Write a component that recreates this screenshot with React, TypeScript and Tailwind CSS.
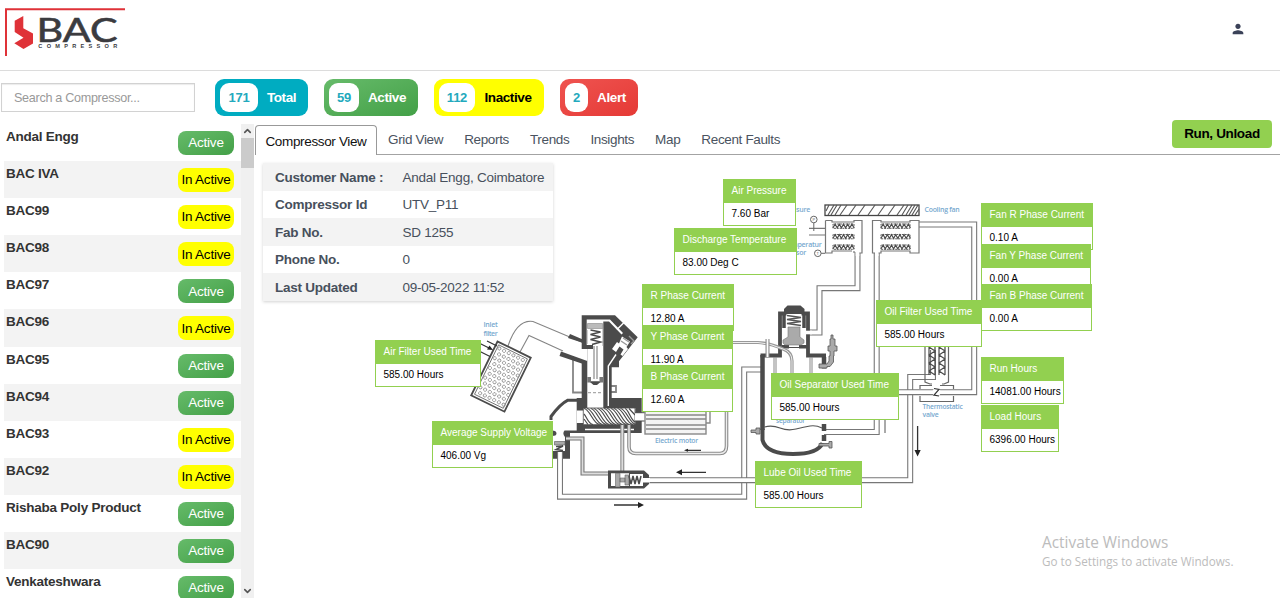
import { MdPerson } from "react-icons/md";
import { LuChevronDown, LuChevronUp } from "react-icons/lu";
import clsx from "clsx";

const compressors: [string, boolean][] = [
  ["Andal Engg", true],
  ["BAC IVA", false],
  ["BAC99", false],
  ["BAC98", false],
  ["BAC97", true],
  ["BAC96", false],
  ["BAC95", true],
  ["BAC94", true],
  ["BAC93", false],
  ["BAC92", false],
  ["Rishaba Poly Product", true],
  ["BAC90", true],
  ["Venkateshwara", true],
];

const chips = [
  { n: "171", label: "Total", box: "w-[93px] bg-[#00acc1] text-white", num: "w-[38px]" },
  { n: "59", label: "Active", box: "w-[94px] bg-linear-to-br from-[#66bb6a] to-[#43a047] text-white", num: "w-[30px]" },
  { n: "112", label: "Inactive", box: "w-[110px] bg-[#ffff00] text-black", num: "w-[36px]" },
  { n: "2", label: "Alert", box: "w-[78px] bg-linear-to-br from-[#ef5350] to-[#e53935] text-white", num: "w-[23px]" },
];

const tabs = ["Grid View", "Reports", "Trends", "Insights", "Map", "Recent Faults"];

const info = [
  ["Customer Name :", "Andal Engg, Coimbatore"],
  ["Compressor Id", "UTV_P11"],
  ["Fab No.", "SD 1255"],
  ["Phone No.", "0"],
  ["Last Updated", "09-05-2022 11:52"],
];

// Readings pinned on the schematic; positions are relative to the canvas.
const readings = [
  { label: "Air Pressure", value: "7.60 Bar", pos: "left-[468px] top-[24px] w-[73px]" },
  { label: "Discharge Temperature", value: "83.00 Deg C", pos: "left-[419px] top-[73px] w-[123px]" },
  { label: "R Phase Current", value: "12.80 A", pos: "left-[387px] top-[129px] w-[92px]" },
  { label: "Y Phase Current", value: "11.90 A", pos: "left-[387px] top-[170px] w-[91px]" },
  { label: "B Phase Current", value: "12.60 A", pos: "left-[387px] top-[210px] w-[91px]" },
  { label: "Oil Filter Used Time", value: "585.00 Hours", pos: "left-[621px] top-[145px] w-[106px]" },
  { label: "Fan R Phase Current", value: "0.10 A", pos: "left-[726px] top-[48px] w-[112px]" },
  { label: "Fan Y Phase Current", value: "0.00 A", pos: "left-[726px] top-[89px] w-[110px]" },
  { label: "Fan B Phase Current", value: "0.00 A", pos: "left-[726px] top-[129px] w-[111px]" },
  { label: "Run Hours", value: "14081.00 Hours", pos: "left-[726px] top-[202px] w-[83px]" },
  { label: "Load Hours", value: "6396.00 Hours", pos: "left-[726px] top-[250px] w-[78px]" },
  { label: "Oil Separator Used Time", value: "585.00 Hours", pos: "left-[516px] top-[218px] w-[128px]" },
  { label: "Lube Oil Used Time", value: "585.00 Hours", pos: "left-[500px] top-[306px] w-[107px]" },
  { label: "Air Filter Used Time", value: "585.00 Hours", pos: "left-[120px] top-[185px] w-[106px]" },
  { label: "Average Supply Voltage", value: "406.00 Vg", pos: "left-[177px] top-[266px] w-[121px]" },
];

function Logo() {
  return (
    <svg width="130" height="60" viewBox="0 0 130 60">
      <path d="M6 56V9.3H125" fill="none" stroke="#df3238" strokeWidth="2" />
      <path d="M23.3 16V28.3L33 33.5V43.5L23.5 49L14.3 43.3L23.5 37.8L14.7 32V20.7Z" fill="#df3238" />
      <text x="36.5" y="42" fontFamily="Lato, sans-serif" fontSize="33" fill="#3b3b3f" stroke="#3b3b3f" strokeWidth=".6" textLength="81" lengthAdjust="spacingAndGlyphs">BAC</text>
      <text x="38.3" y="48" fontFamily="Liberation Sans, sans-serif" fontWeight="700" fontSize="5.6" fill="#3b3b3f" textLength="79">COMPRESSOR</text>
    </svg>
  );
}

function Pipe({ d, w = 6, color = "#777777", inner = "#fff" }: { d: string; w?: number; color?: string; inner?: string }) {
  return (
    <g fill="none" strokeLinejoin="miter">
      <path d={d} stroke={color} strokeWidth={w} />
      <path d={d} stroke={inner} strokeWidth={w - 2.2} />
    </g>
  );
}

function Coil({ x, y, w }: { x: number; y: number; w: number }) {
  let d = `M${x} ${y + 4.3}`;
  for (let i = 0; i < w - 3; i += 4.2) d += `l2.1 -3.6l2.1 3.6`;
  return (
    <g fill="none" stroke="#4a4a4a" strokeWidth=".9">
      <path d={`M${x} ${y + 4.8}V${y + 0.5}H${x + w}V${y + 4.8}Z`} strokeDasharray="2 .8" />
      <path d={d} strokeWidth="1.1" />
    </g>
  );
}

function Schematic() {
  const holes = [];
  for (let r = 0; r < 10; r++)
    for (let c = 0; c < 6; c++) holes.push(<circle key={`${r}-${c}`} cx={4.8 + c * 5.2 + (r % 2) * 2.3} cy={5.5 + r * 5.4} r="1.6" />);
  const dark = "#4b4b4b";
  return (
    <svg className="block h-[443px] w-[1025px]" viewBox="255 155 1025 443">
      {/* air inlet */}
      <g fill="none" stroke="#858585" strokeWidth="1.1">
        <path d="M508 346Q517 319 533 321.500L584 343M520 352L529 335.500L563 351" />
        <path d="M573 356V392.500H582M611 392H616V386H611" strokeWidth="1.800" />
      </g>
      <g transform="translate(497.500 341.500) rotate(26)">
        <rect x="0" y="0" width="37" height="60" fill="#fff" stroke={dark} strokeWidth="1.800" />
        <rect x="2.500" y="2.500" width="32" height="55" fill="none" stroke={dark} strokeWidth=".7" />
        <g fill="none" stroke="#8a8a8a" strokeWidth=".8">{holes}</g>
      </g>
      <path d="M479 343L489 348M479 351L490 356.500M487 341L497 346" stroke="#333" strokeWidth="1.200" />
      <path d="M493 350L487 349.500L489.500 345.500Z" fill="#222" />
      {/* compressor head, cylinder and rotor housing */}
      <path d="M581.700 315.300H615L637.700 337.300L619 361.300V367.300H611.700V398H641.700V433H576.700V398H581.700V363.500L559.500 356L561 351.500L587.300 361V349H581.700V342.500L568 338L570 334L581.700 339Z" fill={dark} />
      <path d="M586.700 319.500H610L623 333L621.500 334.500L609 321.500H603.300V410H587.300V349H593V345H586.700Z" fill="#fff" />
      <path d="M576.700 410.500H584V423H576.700Z" fill="#fff" />
      <rect x="583.300" y="408" width="52" height="16.700" fill="#fff" />
      <path d="M585 429.600H634" stroke="#fff" strokeWidth="1.500" />
      <path d="M577 400.300H567.500Q560 404 551 416.500V420" fill="none" stroke={dark} strokeWidth="3" />
      {/* spring, stem and piston */}
      <path d="M587.500 323.500H602.500V328.500H587.500Z" fill="#bbb" stroke="#888" strokeWidth=".6" />
      <path d="M590.500 330L600.500 332L590.500 334.500L600.500 337L590.500 339.500L600.500 342L592 344.500" fill="none" stroke={dark} strokeWidth="1.600" />
      <path d="M587 330V344M603 328V346" stroke="#888" strokeWidth=".8" />
      <path d="M594 346V379M597 346V379" stroke="#8b8b8b" strokeWidth="1.200" />
      <path d="M587.300 377H591V381H599.500V377H603.300V382.500H587.300Z" fill="#777" />
      <path d="M590 382H600.500L597 385H593.500Z" fill={dark} />
      <path d="M588 392.700H603" stroke="#aaa" strokeWidth="1.300" strokeDasharray="3 2" />
      <path d="M608.300 406V366L616 354.500" fill="none" stroke="#fff" strokeWidth="1.400" />
      {/* relief valve */}
      <path d="M617 329.500L625.500 321" stroke="#fff" strokeWidth="1.500" />
      <path d="M612 349L617 342L619 343.500L622 336.500L630 341.500L626.500 347L628 349L622.500 356L620.500 354.500L623.500 349.500L619.500 346.500L616 352Z" fill="#fff" />
      <path d="M621 341L627 345M623 338L629 342M629 336L634 341L631 344" fill="none" stroke="#999" strokeWidth="1.400" />
      {/* rotor */}
      <g fill="none" stroke={dark} strokeWidth="1.200">
        <path d="M583.300 408H635V424.700H583.300Z" strokeWidth=".8" />
        {[0, 6.7, 13.4, 20.1, 26.8, 33.5].map((x) => (
          <path key={x} d={`M${584 + x} 408.500C${590 + x} 409 ${593 + x} 424 ${599.5 + x} 424.500M${587 + x} 408.500C${593 + x} 409 ${596 + x} 424 ${602.5 + x} 424.500`} />
        ))}
        <path d="M584 414C587 417 588 424 593 424.500M584 419L588 424.500M625 408.500C629 410 630 419 635 422M629 408.500L635 415" />
      </g>
      <path d="M635 412.700H646V421H635Z" fill="#fff" />
      <path d="M635 412.700H645M635 421H645" stroke={dark} />
      {/* electric motor */}
      <g fill="none" stroke="#888" strokeWidth="1.400">
        <rect x="645" y="396" width="61" height="38" fill="#f4f4f4" />
        <path d="M646 415H706M646 419H706M646 425H706M646 429H706M706 408H710V423H706" />
      </g>
      <Pipe d="M629 425V447Q629 453.500 636 453.500H720Q726.500 453.500 726.500 446V411" w={3.6} color="#8b8b8b" inner="#eee" />
      <Pipe d="M622.300 425V476" w={4} color="#8b8b8b" inner="#ddd" />
      {/* lower-left valve and piping */}
      <path d="M552 430.500Q556.500 430.500 556.500 433.500Q556.500 436 552 436ZM564.500 430.500H577V433H570V458.700H552.300V451H565V437Q562 433.500 564.500 430.500Z" fill={dark} />
      <path d="M554.500 441.500H565V445H554.500Z" fill="#aaa" stroke="#666" strokeWidth=".7" />
      <path d="M556 446.500L563 446L556 449.500L563 450.500" fill="none" stroke={dark} strokeWidth="1.500" />
      <Pipe d="M566 438.500H582.500V473.500H609" w={4} color="#777" inner="#ddd" />
      <Pipe d="M560 452V496.700H744.200V369.500H762" />
      <Pipe d="M647 480.200H910.200V377H933V350" />
      <path d="M608 470.500H644L649 475V484L644 488.500H608Z" fill={dark} />
      <path d="M611 473.300H629V486H611ZM630 474H643V486H630ZM643 478H650V482.500H643Z" fill="#fff" />
      <path d="M615.500 473.300H620V487H615.500ZM620 478H625V482H620ZM625 475H629V485H625Z" fill="#aaa" stroke="#666" strokeWidth=".6" />
      <path d="M629 476L631 484L633 476L635 484L637 476L639 484L641 476" fill="none" stroke={dark} strokeWidth="1.500" />
      {/* cooler pipes */}
      <Pipe d="M857.500 252V288.200H819.500V332.500H807" />
      <Pipe d="M876.700 252V432H824" />
      <Pipe d="M919 224.500H974.200V392.200H897" />
      <path d="M885 419V433" stroke="#555" />
      {/* fan */}
      <rect x="825" y="205" width="94" height="10.500" fill="#fff" stroke="#444" strokeWidth="1.300" />
      <path d="M826 211L829 205M828 215L834 205M831 215L837 205M835 215L841 205M840 215L847 205M849 215L856 205M858 215L865 205M868 215L875 205M878 215L885 205M888 215L895 205M897 215L904 205M902 215L908 205M906 215L912 205M909 215L915 205M912 215L918 205M915 215L919 209" stroke="#555" strokeWidth="1.100" />
      {/* radiators */}
      <g fill="#fff" stroke="#777" strokeWidth="1.200">
        <path d="M825.500 220.500H832V222H854V220.500H862V253H857M852 251H832V253H825.500V220.500M854 251V253" />
        <path d="M872.500 220.500H881V222H910V220.500H919V253H910V251H881V253H872.500Z" />
        <path d="M809 228.300H825M809 235H825" />
      </g>
      <path d="M855.700 248H859.300V256H855.700ZM875 248H878.500V256H875Z" fill="#fff" />
      {[223.500, 234, 244.500].map((y) => (
        <g key={y}>
          <Coil x={833} y={y} w={21} />
          <Coil x={881} y={y} w={29} />
        </g>
      ))}
      <g fill="#fff" stroke="#666" strokeWidth="1">
        <path d="M813.800 223V231M821 253.300H825" />
        <circle cx="813.800" cy="219.500" r="3.300" />
        <circle cx="817.800" cy="253.300" r="3.300" />
      </g>
      <text x="812.500" y="221.300" fontSize="4" fill="#666">P</text>
      <text x="816.600" y="255" fontSize="4" fill="#666">T</text>
      {/* oil separator */}
      <path d="M762.500 355V430M824 357V368.500M824 424V431M824 435V441" stroke={dark} strokeWidth="4.500" />
      <path d="M762.500 429V440Q766 454 793 454Q818 454 822.500 443" fill="none" stroke={dark} strokeWidth="4" />
      <path d="M760.500 355.500H780V313.500H808V355.500H826" fill="none" stroke={dark} strokeWidth="3.800" />
      <path d="M784 314V328M804 314V328" stroke={dark} strokeWidth="3.500" />
      <path d="M784 314V309L787.500 305.500H800.500L804.500 309V314Z" fill={dark} />
      <path d="M782 345H789V347H799V345H807V348.500H782Z" fill={dark} />
      <path d="M789 348H799V349.500H789Z" fill="#fff" />
      <path d="M786.500 314H801.500V327H786.500Z" fill="#fff" />
      <path d="M787 315.500L801 317.500L787 319.500L801 321.500L787 323.500L801 325.500" fill="none" stroke="#555" strokeWidth="1.300" />
      <path d="M788 327H800V337L804 340V343L801 345H785L783 343V340L788 337Z" fill="#aaa" stroke="#777" strokeWidth=".6" />
      <path d="M806 330.700H812V334.300H806Z" fill="#fff" />
      <Pipe d="M732 342.500H758Q770 343 783 349Q792 352 792 361V374" w={3.2} color="#999" inner="#eee" />
      <Pipe d="M767.500 339V357" w={4} color="#888" />
      <path d="M774 357V374M776 357V374M810 357V374M812 357V374" stroke="#888" />
      <path d="M764.500 427Q772 425 780 428T796 429T810 426T822 428" fill="none" stroke="#555" strokeWidth="1.200" />
      <g fill="#aaa" stroke="#555" strokeWidth=".8">
        <path d="M751 430H756V428H760V434H756V432.500H751ZM819 443.500H829V441.500H832V448H829V446H819Z" />
        <path d="M831 335H833V339H835V346H837V351H834V356H833.500V362L830 366.500H827V368H819V364H827L829 361V356H830V351H828V346H830V339H831Z" />
      </g>
      {/* thermostatic valve */}
      <g fill="none" stroke="#666" strokeWidth="1.200">
        <path d="M925 347V382L930 384H932M948.500 347V382L944 384H942" />
        <path d="M920 389V385.500H932M940 385.500H953.500V389M920 396V401.500H953.500V396" />
        <path d="M929 347V375M935 347V375M939 347V375M945 347V375M929 347L935 351L929 355L935 359L929 363L935 367L929 371L935 375M939 347L945 351L939 355L945 359L939 363L945 367L939 371L945 375" stroke={dark} />
      </g>
      <circle cx="936.500" cy="392.200" r="4" fill="#fff" />
      <path d="M934 388.500L939 389.500L934 395L939 396" fill="none" stroke="#333" strokeWidth="1.200" />
      {/* flow arrows */}
      <path d="M614 505H639M680 472.300H706M917.600 426V451M688 450.300H701" stroke="#333" strokeWidth="1.300" />
      <path d="M644 505L638 502V508ZM676 472.300L682 469.300V475.300ZM917.600 456.500L914.500 450H920.700ZM684 450.300L688 448.800V451.800Z" fill="#222" />
      {/* captions */}
      <g fontFamily="Open Sans, sans-serif" fontSize="7" fontWeight="600" fill="#78a9cf">
        <text x="483.500" y="326.500" textLength="14">Inlet</text>
        <text x="483.500" y="335.500" textLength="14">filter</text>
        <text x="655" y="442.500" textLength="43" lengthAdjust="spacingAndGlyphs">Electric motor</text>
        <text x="924.500" y="212" textLength="35" lengthAdjust="spacingAndGlyphs">Cooling fan</text>
        <text x="922.500" y="408.500" textLength="40" lengthAdjust="spacingAndGlyphs">Thermostatic</text>
        <text x="922.500" y="417" textLength="16" lengthAdjust="spacingAndGlyphs">valve</text>
        <text x="776" y="423" textLength="29" lengthAdjust="spacingAndGlyphs">separator</text>
        <text x="810" y="212" textAnchor="end">Pressure</text>
        <text x="821.500" y="246.500" textAnchor="end">Temperatur</text>
        <text x="806" y="255" textAnchor="end">sensor</text>
      </g>
    </svg>
  );
}

export default function App() {
  return (
    <div className="flex h-[598px] w-[1280px] flex-col overflow-hidden bg-white font-['Liberation_Sans',sans-serif] text-[13.5px] leading-none tracking-[-0.24px]">
      <header className="flex h-[71px] shrink-0 items-start justify-between border-b border-[#dcdcdc] tracking-normal">
        <Logo />
        <MdPerson className="mt-[21px] mr-[34px] size-4 text-[#3b4258]" />
      </header>

      <div className="flex h-[53px] shrink-0 items-start">
        <input
          placeholder="Search a Compressor..."
          className="mt-3 ml-px h-[29px] w-[194px] border border-[#d2d2d2] px-3 text-[12.6px] tracking-[-0.3px] shadow-[inset_0_1px_1px_rgba(0,0,0,0.08)] placeholder:text-[#999]"
        />
        <div className="mt-2 ml-5 flex gap-4">
          {chips.map((c) => (
            <div key={c.label} className={clsx("flex h-[37px] items-center rounded-[9px] pl-[5px] font-bold", c.box)}>
              <span className={clsx("flex h-[29px] items-center justify-center rounded-[9px] bg-white text-[13px] text-[#23a9bd]", c.num)}>{c.n}</span>
              <span className="grow pr-[3px] text-center tracking-[-0.4px]">{c.label}</span>
            </div>
          ))}
        </div>
      </div>

      <div className="flex min-h-0 grow">
        <aside className="flex w-[255px] shrink-0 overflow-hidden pl-1">
          <ul className="w-[237px]">
            {compressors.map(([name, active]) => (
              <li key={name} className="flex h-[37.1px] justify-between pt-[7px] pr-[7px] pl-[2px] even:bg-[#f3f3f3]">
                <span className="-mt-px leading-[13px] font-bold text-[#333]">{name}</span>
                <span
                  className={clsx(
                    "flex h-6 w-14 items-center justify-center rounded-[8px] text-[13.5px]",
                    active ? "bg-linear-to-br from-[#66bb6a] to-[#43a047] text-white" : "bg-[#ffff00] text-black",
                  )}
                >
                  {active ? "Active" : "In Active"}
                </span>
              </li>
            ))}
          </ul>
          <div className="flex w-[13px] flex-col items-center justify-between bg-[#f0f0f0] text-[#555]">
            <div className="flex w-full flex-col items-center">
              <LuChevronUp className="h-[14px] w-[11px]" strokeWidth={3.5} />
              <div className="h-[30px] w-full bg-[#cbcbcb]" />
            </div>
            <LuChevronDown className="h-[14px] w-[11px]" strokeWidth={3.5} />
          </div>
        </aside>

        <main className="flex grow flex-col">
          <div className="flex h-[31px] shrink-0 items-end border-b border-[#a3a3a3] tracking-[-0.35px]">
            <div className="-mb-px flex h-[30px] w-[122px] items-center justify-center rounded-t-[4px] border border-b-0 border-[#999] bg-white pt-[2px] text-[#111]">
              Compressor View
            </div>
            <nav className="flex h-[29px] grow items-center gap-[21px] pt-px pl-[11px] text-[#4a5360]">
              {tabs.map((t) => (
                <span key={t}>{t}</span>
              ))}
            </nav>
            <button className="mr-2 mb-[6px] h-7 w-[100px] rounded-[4px] bg-[#92d050] font-bold text-black">Run, Unload</button>
          </div>

          <div className="relative grow overflow-hidden">
            <Schematic />
            <dl className="absolute top-2 left-2 w-[290px] shadow-[0_1px_3px_rgba(0,0,0,0.18)]">
              {info.map(([k, v]) => (
                <div key={k} className="flex h-[27.6px] items-center bg-white pt-px pl-3 text-[#47505c] odd:bg-[#f3f3f3]">
                  <dt className="w-[127.500px] font-bold">{k}</dt>
                  <dd>{v}</dd>
                </div>
              ))}
            </dl>
            {readings.map((r) => (
              <div key={r.label} className={clsx("absolute h-[47px] border border-[#92d050] bg-white text-[10px] tracking-normal whitespace-nowrap", r.pos)}>
                <div className="flex h-[22.500px] items-center bg-[#92d050] pl-[7.500px] text-white">{r.label}</div>
                <div className="flex h-[22.500px] items-center pl-[7.500px] text-black">{r.value}</div>
              </div>
            ))}
            <div className="absolute top-[378px] left-[787px] font-['Open_Sans',sans-serif] tracking-normal text-[#bcbcbc]">
              <p className="text-[15.400px] leading-[20px]">Activate Windows</p>
              <p className="text-[11.700px] leading-[16px]">Go to Settings to activate Windows.</p>
            </div>
          </div>
        </main>
      </div>
    </div>
  );
}
